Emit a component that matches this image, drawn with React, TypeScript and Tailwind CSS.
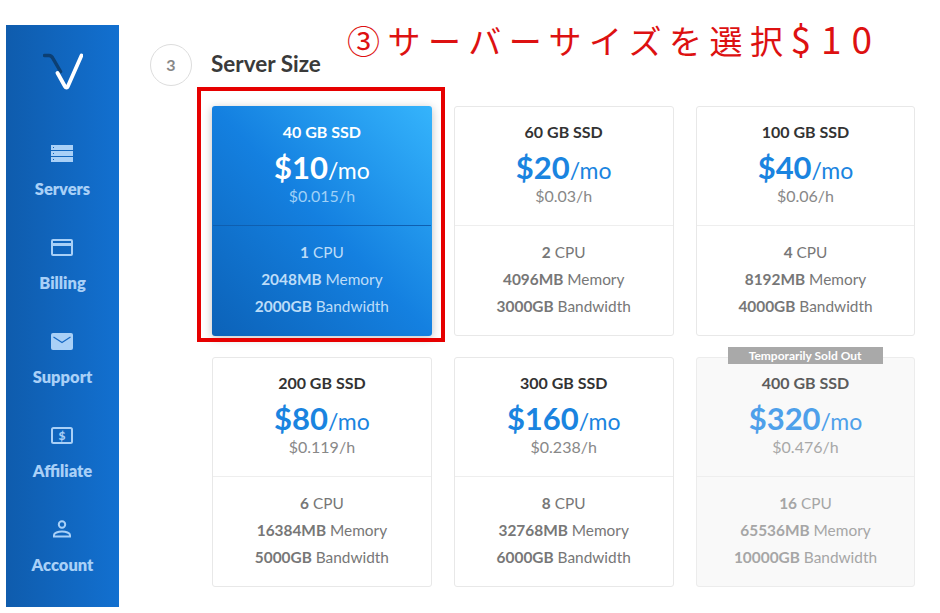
import React from 'react'

interface Plan {
  title: string
  price: string
  hourly: string
  cpu: string
  memory: string
  bandwidth: string
  selected?: boolean
  soldOut?: boolean
}

const plans: Plan[] = [
  { title: '40 GB SSD', price: '$10', hourly: '$0.015/h', cpu: '1', memory: '2048MB', bandwidth: '2000GB', selected: true },
  { title: '60 GB SSD', price: '$20', hourly: '$0.03/h', cpu: '2', memory: '4096MB', bandwidth: '3000GB' },
  { title: '100 GB SSD', price: '$40', hourly: '$0.06/h', cpu: '4', memory: '8192MB', bandwidth: '4000GB' },
  { title: '200 GB SSD', price: '$80', hourly: '$0.119/h', cpu: '6', memory: '16384MB', bandwidth: '5000GB' },
  { title: '300 GB SSD', price: '$160', hourly: '$0.238/h', cpu: '8', memory: '32768MB', bandwidth: '6000GB' },
  { title: '400 GB SSD', price: '$320', hourly: '$0.476/h', cpu: '16', memory: '65536MB', bandwidth: '10000GB', soldOut: true },
]

const ServersIcon = () => (
  <svg width="22" height="17" viewBox="0 0 22 17" fill="currentColor">
    <path fillRule="evenodd" d="M0 0h22v5H0zM2 2v1h1V2zM0 6h22v5H0zM2 8v1h1V8zM0 12h22v5H0zM2 14v1h1v-1z" />
  </svg>
)

const BillingIcon = () => (
  <svg width="22" height="17" viewBox="0 0 22 17" fill="currentColor">
    <path fillRule="evenodd" d="M2 0h18a2 2 0 0 1 2 2v13a2 2 0 0 1-2 2H2a2 2 0 0 1-2-2V2a2 2 0 0 1 2-2zM2 7v8h18V7zM2 2v2h18V2z" />
  </svg>
)

const SupportIcon = () => (
  <svg width="22" height="17" viewBox="0 0 22 17">
    <rect width="22" height="17" rx="2" fill="currentColor" />
    <path d="M2.500 4 11 9.500 19.500 4" fill="none" stroke="#1769c4" strokeWidth="1.200" />
  </svg>
)

const AffiliateIcon = () => (
  <svg width="22" height="17" viewBox="0 0 22 17" fill="none" stroke="currentColor">
    <rect x="1" y="1" width="20" height="15" rx="1.500" strokeWidth="2" />
    <text x="11" y="13" textAnchor="middle" fontSize="12" fontWeight="900" fontFamily="Lato, sans-serif" fill="currentColor" stroke="none">$</text>
  </svg>
)

const AccountIcon = () => (
  <svg width="18" height="18" viewBox="0 0 18 18" fill="none" stroke="currentColor" strokeWidth="2">
    <circle cx="9" cy="4.500" r="3.200" />
    <path d="M1 16.500v-1.500c0-2 4-3.500 8-3.500s8 1.500 8 3.500v1.500z" />
  </svg>
)

const navItems = [
  { label: 'Servers', icon: <ServersIcon /> },
  { label: 'Billing', icon: <BillingIcon /> },
  { label: 'Support', icon: <SupportIcon /> },
  { label: 'Affiliate', icon: <AffiliateIcon /> },
  { label: 'Account', icon: <AccountIcon /> },
]

function Sidebar() {
  return (
    <aside className="w-[113px] h-[582px] shrink-0 bg-gradient-to-r from-[#0f5cad] to-[#1270d0] flex flex-col items-center">
      <svg className="mt-[28px]" width="40" height="38" viewBox="0 0 40 38" fill="none" strokeLinecap="round">
        <path d="M1.500 2.500H6c2 0 3 1 4 3l7.500 13" stroke="#0c3f73" strokeWidth="3.500" />
        <path d="M14.500 20l7.500 13.500c.8 1.500 2.200 1.500 2.800 0L38.500 2.500" stroke="#ffffff" strokeWidth="3.800" />
      </svg>
      <nav className="mt-[53px] flex flex-col items-center gap-[38px] text-[#a9d0f7]">
        {navItems.map((item) => (
          <div key={item.label} className="flex flex-col items-center h-[56px]">
            <div className="h-[18px] flex items-center">{item.icon}</div>
            <div className="mt-[17px] text-[16.500px] leading-[20px] font-extrabold">{item.label}</div>
          </div>
        ))}
      </nav>
    </aside>
  )
}

function PlanCard({ plan }: { plan: Plan }) {
  const { selected, soldOut } = plan
  return (
    <div
      className={
        selected
          ? 'relative h-[230px] rounded-[3px] border border-transparent bg-origin-border bg-gradient-to-tr from-[#0c62b8] via-[#1480e0] to-[#35b4fc] shadow-[0_2px_10px_rgba(0,0,0,0.25)] flex flex-col'
          : soldOut
            ? 'relative h-[230px] rounded-[3px] border border-[#ececec] bg-[#f9f9f9] flex flex-col'
            : 'relative h-[230px] rounded-[3px] border border-[#e8e8e8] bg-white flex flex-col'
      }
    >
      {soldOut && (
        <div className="absolute -top-[11px] left-[31px] w-[155px] h-[17px] bg-[#a9a9a9] text-white text-[12px] leading-[17px] font-bold text-center">
          Temporarily Sold Out
        </div>
      )}
      <div
        className={
          selected
            ? 'h-[119px] shrink-0 border-b border-[#0f5fb0] flex flex-col items-center'
            : 'h-[119px] shrink-0 border-b border-[#eeeeee] flex flex-col items-center'
        }
      >
        <div className={`mt-[15px] text-[16px] leading-[20px] font-bold ${selected ? 'text-white' : soldOut ? 'text-[#5c5c5c]' : 'text-[#333333]'}`}>
          {plan.title}
        </div>
        <div className={`mt-[10px] h-[30px] flex items-baseline leading-[30px] ${selected ? 'text-white' : soldOut ? 'text-[#4ea0ea]' : 'text-[#1a84e0]'}`}>
          <span className="text-[31px] font-bold">{plan.price}</span>
          <span className="text-[23px] font-normal">/mo</span>
        </div>
        <div className={`mt-[4px] text-[16px] leading-[20px] ${selected ? 'text-[#9fd0f7]' : soldOut ? 'text-[#a8a8a8]' : 'text-[#888888]'}`}>
          {plan.hourly}
        </div>
      </div>
      <div className={`pt-[13px] flex flex-col items-center text-[15.400px] leading-[27px] ${selected ? 'text-[#bcdcf8]' : soldOut ? 'text-[#a6a6a6]' : 'text-[#777777]'}`}>
        <div><span className="font-bold">{plan.cpu}</span> CPU</div>
        <div><span className="font-bold">{plan.memory}</span> Memory</div>
        <div><span className="font-bold">{plan.bandwidth}</span> Bandwidth</div>
      </div>
    </div>
  )
}

export default function App() {
  return (
    <div className="relative w-[940px] h-[613px] bg-white overflow-hidden font-['Lato','Noto_Sans_CJK_JP',sans-serif]">
      <div className="pt-[25px] pl-[6px] flex">
        <Sidebar />
        <main className="ml-[31px] w-[770px]">
          <div className="flex items-center h-[42px] mt-[19px]">
            <div className="w-[42px] h-[42px] rounded-full border border-[#dddddd] flex items-center justify-center text-[16px] font-bold text-[#888888]">
              3
            </div>
            <h2 className="ml-[19px] -mt-[2px] text-[22.500px] font-bold text-[#3a3a3a]">Server Size</h2>
          </div>
          <div className="mt-[20px] ml-[62px] grid grid-cols-3 gap-x-[22px] gap-y-[21px] w-[703.400px]">
            {plans.map((plan) => (
              <PlanCard key={plan.title} plan={plan} />
            ))}
          </div>
        </main>
      </div>
      {/* annotation over the screenshot */}
      <div className="absolute left-[347px] top-[18px] text-[33px] leading-[40px] tracking-[7.500px] font-normal text-[#dd1111] whitespace-nowrap font-['Noto_Sans_CJK_JP',sans-serif]">
        ③サーバーサイズを選択<span className="text-[37px] tracking-[10px]">$10</span>
      </div>
      <div className="absolute left-[197px] top-[87px] w-[248px] h-[255px] border-[4px] border-[#e60000]" />
    </div>
  )
}
